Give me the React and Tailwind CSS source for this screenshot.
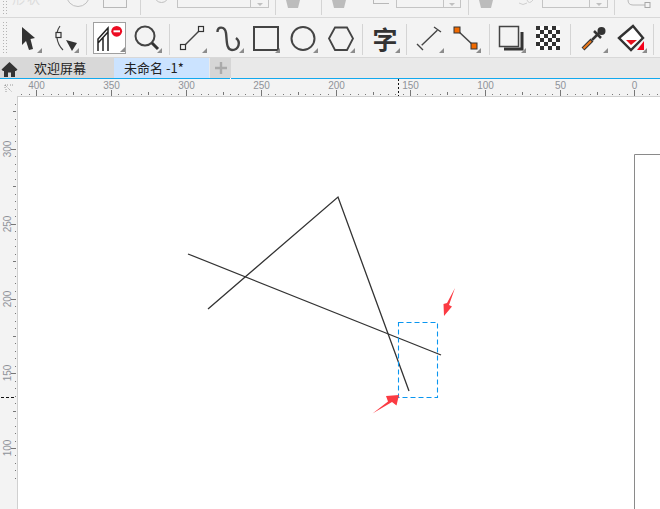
import React from 'react';

const CJK = { fontFamily: '"Noto Sans CJK SC", "Liberation Sans", sans-serif' };

// clipped property bar along the very top of the window
const Sep = ({ className }) => <div className={`w-px shrink-0 bg-[#d4d4d4] ${className}`} />;

const ClippedInput = ({ outer, inner }) => (
  <div className={`flex h-[8px] shrink-0 border-x border-b border-[#c4c4c4] ${outer}`}>
    <div className={`h-full border-r border-[#c4c4c4] ${inner}`} />
    <div className="flex flex-1 justify-center pt-[3px]">
      <div className="h-0 w-0 border-x-[3px] border-t-[3px] border-x-transparent border-t-[#c0c0c0]" />
    </div>
  </div>
);

const Trapezoid = ({ className }) => (
  <svg width="14" height="8" viewBox="0 0 14 8" className={`shrink-0 ${className}`}>
    <polygon points="0,0 14,0 12,8 2,8" fill="#bcbcbc" />
  </svg>
);

const Grip = ({ className }) => (
  <div className={`w-[6px] shrink-0 bg-[radial-gradient(#b4b4b4_0.8px,transparent_0.9px)] bg-size-[3px_3px] ${className}`} />
);

const PropertyBar = () => (
  <div className="flex h-[18px] items-start overflow-hidden border-b border-[#d8d8d8] bg-[#f3f3f3]">
    <Grip className="ml-[2px] h-[16px]" />
    <span className="ml-[4px] -mt-[12px] shrink-0 text-[13px] tracking-[2px] text-[#dcdcdc]" style={CJK}>形状</span>
    <div className="ml-[24px] -mt-[17px] h-[24px] w-[24px] shrink-0 rounded-full border border-[#c0c0c0]" />
    <div className="ml-[13px] h-[8px] w-[24px] shrink-0 border-x border-b border-[#b8b8b8]" />
    <Sep className="ml-[13px] h-[15px]" />
    <div className="ml-[13px] -mt-[12px] h-[15px] w-[15px] shrink-0 rounded-full border border-[#c0c0c0]" />
    <ClippedInput outer="ml-[8px] w-[92px]" inner="w-[73px]" />
    <Sep className="ml-[6px] h-[15px]" />
    <Trapezoid className="ml-[10px]" />
    <Sep className="ml-[21px] h-[15px]" />
    <Trapezoid className="ml-[10px]" />
    <div className="ml-[27px] h-[4px] w-[16px] shrink-0 border-b border-l border-[#b8b8b8]" />
    <ClippedInput outer="ml-[7px] w-[65px]" inner="w-[47px]" />
    <Sep className="ml-[7px] h-[15px]" />
    <Trapezoid className="ml-[10px]" />
    <svg width="16" height="6" viewBox="0 0 16 6" className="ml-[26px] shrink-0">
      <path d="M0 3 Q4 6 8 3 M8 0 Q10 5 14 0" fill="none" stroke="#cfcfcf" />
    </svg>
    <ClippedInput outer="ml-[7px] w-[66px]" inner="w-[47px]" />
    <Sep className="ml-[6px] h-[15px]" />
    <svg width="24" height="9" viewBox="0 0 24 9" className="ml-[12px] shrink-0">
      <path d="M1 0 Q1 5 6 5 H18" fill="none" stroke="#b8b8b8" />
      <rect x="18" y="2.5" width="5" height="5" fill="#f3f3f3" stroke="#a8a8a8" />
    </svg>
    <Sep className="ml-[9px] h-[15px]" />
  </div>
);

// one toolbox button: 37px cell, icon drawn in cell coordinates, flyout corner included
const Tool = ({ children, corner = 26, className = '' }) => (
  <div className={`h-[38px] w-[37px] shrink-0 ${className}`}>
    <svg width="37" height="38" viewBox="0 0 37 38">
      {children}
      {corner !== null && (
        <polygon points={`${corner},35 ${corner + 5},35 ${corner + 5},30`} fill="#8c8c8c" />
      )}
    </svg>
  </div>
);

const Node = ({ x, y }) => (
  <rect x={x - 2.5} y={y - 2.5} width="5" height="5" fill="#f3f3f3" stroke="#333" strokeWidth="1.2" />
);

const Checker = () => {
  const squares = [];
  for (let r = 0; r < 6; r++) {
    for (let c = 0; c < 6; c++) {
      if ((r + c) % 2 === 1) {
        squares.push(<rect key={`${r}-${c}`} x={5 + c * 4} y={8 + r * 4} width="4" height="4" fill="#fff" />);
      }
    }
  }
  return (
    <>
      <rect x="5" y="8" width="24" height="24" fill="#333" />
      {squares}
    </>
  );
};

const Toolbox = () => (
  <div className="flex h-[40px] items-start border-b border-[#d8d8d8] bg-[#f3f3f3]">
    <Grip className="ml-[2px] mt-[3px] h-[32px]" />
    <Tool className="ml-[3px]">
      <polygon points="11,9 11,27 15,23 18,32 22,31 19.5,21 24,20" fill="#333" />
    </Tool>
    <Tool>
      <path d="M12 8 C7 15 8 25 15 32" fill="none" stroke="#444" strokeWidth="1.2" />
      <Node x={10.5} y={17} />
      <polygon points="18,22 29,25 24,33" fill="#333" />
    </Tool>
    <Sep className="ml-px mr-[6px] mt-[6px] h-[31px]" />
    <div className="mt-[4px] h-[32px] w-[33px] shrink-0 border border-[#a0a0a0] bg-white">
      <svg width="31" height="30" viewBox="1 5 31 30" className="block">
        <path d="M5 33 V21 L15 10 V33 M10 33 V19 M5 25 L15 14" fill="none" stroke="#222" strokeWidth="1.5" />
        <circle cx="23.7" cy="13.3" r="5.4" fill="#ec0c22" />
        <rect x="20.5" y="12.3" width="6.5" height="2" fill="#fff" />
        <polygon points="27,34 32,34 32,29" fill="#8c8c8c" />
      </svg>
    </div>
    <Tool className="ml-[4px]" corner={27}>
      <circle cx="15" cy="18" r="9.5" fill="none" stroke="#444" strokeWidth="2" />
      <line x1="22" y1="25" x2="28" y2="31" stroke="#333" strokeWidth="3" />
    </Tool>
    <Sep className="ml-[2px] mr-[4px] mt-[6px] h-[31px]" />
    <Tool corner={28}>
      <line x1="9" y1="29" x2="27" y2="11" stroke="#444" strokeWidth="1.4" />
      <Node x={9} y={29} />
      <Node x={27} y={11} />
    </Tool>
    <Tool corner={28}>
      <path d="M6.5 14 C6 8 14 8 15 15 C16 22 15 32 21 32 C28 32 30 24 25 20" fill="none" stroke="#444" strokeWidth="2.4" />
    </Tool>
    <Tool corner={27}>
      <rect x="6" y="9" width="24" height="23" fill="none" stroke="#444" strokeWidth="2" />
    </Tool>
    <Tool corner={28}>
      <circle cx="18" cy="20.5" r="11.5" fill="none" stroke="#444" strokeWidth="2" />
    </Tool>
    <Tool corner={28}>
      <polygon points="7,20.5 13,9.5 25,9.5 31,20.5 25,32 13,32" fill="none" stroke="#444" strokeWidth="1.8" />
    </Tool>
    <Sep className="ml-[3px] mr-[3px] mt-[6px] h-[31px]" />
    <div className="relative h-[38px] w-[37px] shrink-0">
      <span className="flex h-[38px] items-center justify-center pl-[1px] pt-[3px] text-[25px] leading-none font-bold text-[#333]" style={CJK}>字</span>
      <div className="absolute right-[3px] bottom-[3px] h-0 w-0 border-b-[5px] border-l-[5px] border-b-[#8c8c8c] border-l-transparent" />
    </div>
    <Sep className="ml-[3px] mr-[4px] mt-[6px] h-[31px]" />
    <Tool corner={28}>
      <path d="M10.7 27.3 L26.3 12.3 M6 26 L12 32 M23 9 L30 14" fill="none" stroke="#444" strokeWidth="1.4" />
    </Tool>
    <Tool corner={28}>
      <line x1="9" y1="12" x2="26" y2="28" stroke="#444" strokeWidth="1.6" />
      <rect x="6" y="9" width="6" height="6" fill="#f26a00" stroke="#333" />
      <rect x="23" y="25" width="6" height="6" fill="#f26a00" stroke="#333" />
    </Tool>
    <Sep className="ml-[4px] mr-[4px] mt-[6px] h-[31px]" />
    <Tool corner={27}>
      <path d="M28 14 V31 H10" fill="none" stroke="#333" strokeWidth="3" />
      <rect x="5.5" y="8.5" width="19" height="20" fill="none" stroke="#444" strokeWidth="1.5" />
    </Tool>
    <Tool corner={null}>
      <Checker />
    </Tool>
    <Sep className="ml-[2px] mr-[6px] mt-[6px] h-[31px]" />
    <Tool>
      <line x1="6" y1="31" x2="15" y2="22" stroke="#333" strokeWidth="4" />
      <line x1="6.5" y1="30.5" x2="14" y2="23" stroke="#ee7a1c" strokeWidth="2" />
      <line x1="15" y1="22" x2="22" y2="15" stroke="#333" strokeWidth="2.5" />
      <line x1="17" y1="13" x2="24" y2="20" stroke="#333" strokeWidth="2.5" />
      <circle cx="24.5" cy="13" r="4" fill="#333" />
    </Tool>
    <Tool corner={28}>
      <polygon points="5,20 19,8 29,20 17,32" fill="#fff" stroke="#333" strokeWidth="2.4" />
      <polygon points="12,22 23,22 17,27" fill="#e8101c" />
      <polygon points="23,32 30,32 30,23" fill="#f5001a" />
    </Tool>
    <Sep className="ml-[2px] mt-[6px] h-[31px]" />
  </div>
);

const TabBar = () => (
  <div className="flex h-[20px] bg-[#e9e9e9] text-[13px] leading-[20px] text-[#222]" style={CJK}>
    <div className="flex h-full w-[114px] shrink-0 bg-[#d8d8d8]">
      <svg width="18" height="20" viewBox="0 0 18 20" className="ml-px shrink-0">
        <path d="M8.5 4 L0.5 11.5 L2 13 H3 V19 H7 V14.5 H10 V19 H14 V13 H15 L16.5 11.5 Z" fill="#333" />
      </svg>
      <span className="ml-[15px]">欢迎屏幕</span>
    </div>
    <div className="h-full w-[95px] shrink-0 bg-[#cbe3ff] pl-[10px]">未命名 -1*</div>
    <div className="ml-px flex h-full w-[21px] shrink-0 items-center justify-center bg-[#d6d6d6]">
      <svg width="12" height="12" viewBox="0 0 12 12">
        <path d="M6 0 V12 M0 6 H12" stroke="#aaa" strokeWidth="2.4" />
      </svg>
    </div>
  </div>
);

const hLabels = [[400, 36], [350, 111], [300, 186], [250, 261], [200, 336], [150, 410], [100, 485], [50, 560], [0, 634]];
const vLabels = [[300, 149], [250, 224], [200, 299], [150, 373], [100, 448]];
const step = 74.8 / 10;

const HRuler = () => {
  const dots = [];
  for (let i = 0; i < 90; i++) {
    const x = 36 + i * step - step * 2;
    if (i % 10 === 2) continue;
    dots.push(
      <rect key={i} x={Math.round(x)} y={i % 5 === 2 ? 92 : 94} width="1" height={i % 5 === 2 ? 3 : 1} fill="#777" />
    );
  }
  return (
    <svg width="660" height="17" viewBox="0 79 660 17" className="block" style={{ fontFamily: '"Liberation Sans", sans-serif' }}>
      {dots}
      {hLabels.map(([v, x]) => (
        <g key={v}>
          <text x={x + 0.5} y="89" textAnchor="middle" fontSize="10" fill="#8f9299">{v}</text>
          <rect x={x} y="90" width="1" height="6" fill="#777" />
        </g>
      ))}
      <line x1="398.5" y1="79" x2="398.5" y2="96" stroke="#111" strokeDasharray="2 2" />
      <path d="M5 85 L12 92 M5 85 H9 M5 85 V89 M13 85 L9 85 M6 92 L6 88" stroke="#999" strokeDasharray="1 1" fill="none" />
    </svg>
  );
};

const VRuler = () => {
  const dots = [];
  for (let i = -4; i < 60; i++) {
    const y = 448 - i * step;
    if (i % 10 === 0 || y < 98) continue;
    dots.push(
      <rect key={i} x={i % 5 === 0 ? 13 : 15} y={Math.round(y)} width={i % 5 === 0 ? 3 : 1} height="1" fill="#777" />
    );
  }
  return (
    <svg width="17" height="413" viewBox="0 96 17 413" className="block shrink-0" style={{ fontFamily: '"Liberation Sans", sans-serif' }}>
      {dots}
      {vLabels.map(([v, y]) => (
        <g key={v}>
          <text x="11" y={y} transform={`rotate(-90 11 ${y})`} textAnchor="middle" fontSize="10" fill="#8f9299">{v}</text>
          <rect x="11" y={y} width="5" height="1" fill="#777" />
        </g>
      ))}
      <line x1="1" y1="397.5" x2="16" y2="397.5" stroke="#111" strokeDasharray="3 2" />
    </svg>
  );
};

const Drawing = () => (
  <svg width="642" height="412" viewBox="18 97 642 412" className="block">
    <path d="M634.5 509 V154.5 H660" fill="none" stroke="#8a8a8a" />
    <polyline points="208,309 338,197 409,391" fill="none" stroke="#333" strokeWidth="1.3" />
    <line x1="188" y1="254" x2="441" y2="355" stroke="#333" strokeWidth="1.3" />
    <rect x="398.5" y="322.5" width="39" height="75" fill="none" stroke="#0a96f0" strokeWidth="1.1" strokeDasharray="5 3" />
    <polygon points="372.5,413.5 388,401.5 386,396 399,395 396.5,405.5 392,402" fill="#fb3b43" />
    <polygon points="455,288 447,303 443.5,304 444,316 452,306.5 449,305" fill="#fb3b43" />
  </svg>
);

export default function App() {
  return (
    <div className="h-[509px] w-[660px] overflow-hidden bg-[#f3f3f3]">
      <PropertyBar />
      <Toolbox />
      <TabBar />
      <div className="h-px w-full bg-[linear-gradient(to_right,#12a9ee_230px,#fff_230px,#fff_231px,#12a9ee_231px)]" />
      <HRuler />
      <div className="flex">
        <VRuler />
        <div className="border-t border-l border-[#d0d0d0] bg-white">
          <Drawing />
        </div>
      </div>
    </div>
  );
}
